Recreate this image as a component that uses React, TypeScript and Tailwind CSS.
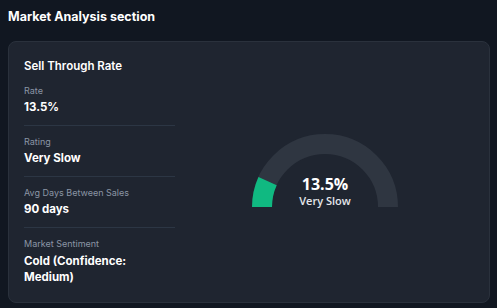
import React from 'react';

interface StatRowProps {
  label: string;
  value: string;
  last?: boolean;
}

const StatRow: React.FC<StatRowProps> = ({ label, value, last }) => {
  return (
    <div className={last ? 'pt-[9px]' : 'pt-[9px] pb-[9px] border-b border-[#2c3644]'}>
      <div className="text-[9px] leading-[14px] text-[#8b95a5]">{label}</div>
      <div className="text-[11.5px] leading-[17px] font-bold text-white mt-[1px]">{value}</div>
    </div>
  );
};

const Gauge: React.FC<{ percent: number; label: string }> = ({ percent, label }) => {
  const cx = 80;
  const cy = 80;
  const r = 63;
  const angle = Math.PI - (percent / 100) * Math.PI;
  const ex = cx + r * Math.cos(angle);
  const ey = cy - r * Math.sin(angle);

  return (
    <div className="relative w-[160px] h-[84px]">
      <svg width="160" height="84" viewBox="0 0 160 84">
        {/* track */}
        <path
          d={`M ${cx - r} ${cy} A ${r} ${r} 0 0 1 ${cx + r} ${cy}`}
          fill="none"
          stroke="#2f3641"
          strokeWidth="20"
        />
        {/* value */}
        <path
          d={`M ${cx - r} ${cy} A ${r} ${r} 0 0 1 ${ex} ${ey}`}
          fill="none"
          stroke="#10b981"
          strokeWidth="20"
        />
      </svg>
      <div className="absolute left-0 right-0 top-[47px] flex flex-col items-center font-['Open_Sans',sans-serif]">
        <span className="text-[16px] leading-[20px] font-bold text-white">{percent}%</span>
        <span className="text-[11px] leading-[13px] font-semibold text-[#e5e7eb]">{label}</span>
      </div>
    </div>
  );
};

export default function App() {
  return (
    <div className="w-[497px] h-[308px] bg-[#111721] font-['Inter',sans-serif] px-2 pt-[8px] overflow-hidden">
      <h2 className="text-[12.5px] leading-[18px] font-bold text-white">Market Analysis section</h2>

      <div className="mt-[15px] w-[482px] h-[262px] bg-[#1f2530] border border-[#2a313c] rounded-lg flex">
        <div className="w-[166px] pl-[15px] pt-[15px]">
          <h3 className="text-[11.5px] leading-[18px] font-semibold text-white">Sell Through Rate</h3>
          <StatRow label="Rate" value="13.5%" />
          <StatRow label="Rating" value="Very Slow" />
          <StatRow label="Avg Days Between Sales" value="90 days" />
          <div className="pt-[9px]">
            <div className="text-[9px] leading-[14px] text-[#8b95a5]">Market Sentiment</div>
            <div className="text-[11.5px] leading-[16px] font-bold text-white mt-[2px] w-[140px]">
              Cold (Confidence: Medium)
            </div>
          </div>
        </div>

        <div className="flex-1 flex items-start justify-center pt-[85px] pr-[14px]">
          <Gauge percent={13.5} label="Very Slow" />
        </div>
      </div>
    </div>
  );
}
